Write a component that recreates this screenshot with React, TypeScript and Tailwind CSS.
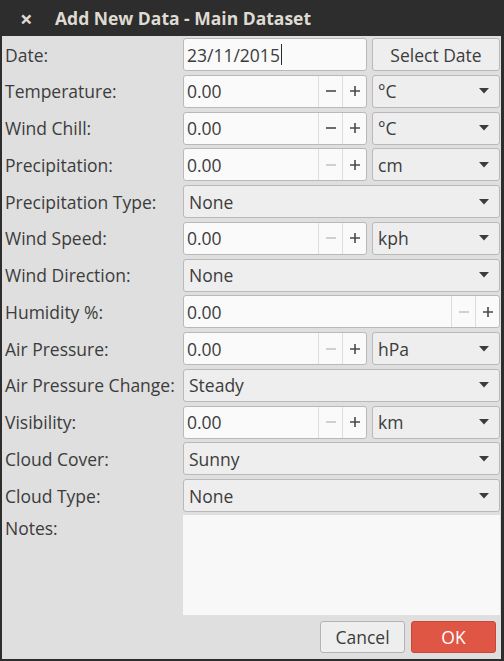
import React from "react";

const font = { fontFamily: '"Open Sans", "Noto Sans", sans-serif' };

function Arrow() {
  return (
    <svg width="10" height="6" viewBox="0 0 10 6" className="shrink-0">
      <path d="M0 0 L10 0 L5 5.5 Z" fill="#3c3c3c" />
    </svg>
  );
}

function Combo({ value }: { value: string }) {
  return (
    <div className="flex h-full flex-1 items-center justify-between rounded-[3px] border border-[#b9b9b9] bg-[#eeeeee] pl-[5px] pr-[10px] text-[#3c3c3c]">
      <span>{value}</span>
      <Arrow />
    </div>
  );
}

function Spin({ minusEnabled }: { minusEnabled: boolean }) {
  return (
    <>
      <div className="flex h-full w-[24px] items-center justify-center border-l border-[#dddddd]">
        <svg width="12" height="12" viewBox="0 0 12 12">
          <path d="M1 6 H11" stroke={minusEnabled ? "#4a4a4a" : "#c6c6c6"} strokeWidth="1.6" />
        </svg>
      </div>
      <div className="flex h-full w-[24px] items-center justify-center border-l border-[#dddddd]">
        <svg width="12" height="12" viewBox="0 0 12 12">
          <path d="M1 6 H11 M6 1 V11" stroke="#4a4a4a" strokeWidth="1.6" />
        </svg>
      </div>
    </>
  );
}

function NumInput({ minusEnabled, full }: { minusEnabled: boolean; full?: boolean }) {
  return (
    <div
      className={
        "flex h-full items-center rounded-[3px] border border-[#b9b9b9] bg-[#fafafa] text-[#3c3c3c] " +
        (full ? "flex-1" : "w-[184px]")
      }
    >
      <span className="flex-1 pl-[3px]">0.00</span>
      <Spin minusEnabled={minusEnabled} />
    </div>
  );
}

type Row = { label: string; content: React.ReactNode };

export default function App() {
  const rows: Row[] = [
    {
      label: "Date:",
      content: (
        <div className="flex h-full flex-1 gap-[5px]">
          <div className="flex h-full w-[184px] items-center rounded-[3px] border border-[#b9b9b9] bg-[#fafafa] pl-[3px] text-[#3c3c3c]">
            <span>23/11/2015</span>
            <span className="ml-[1px] inline-block h-[21px] w-[1px] bg-[#2a2a2a]" />
          </div>
          <div className="flex h-full flex-1 items-center justify-center rounded-[3px] border border-[#b9b9b9] bg-[#eeeeee] text-[#3c3c3c]">
            Select Date
          </div>
        </div>
      ),
    },
    { label: "Temperature:", content: <Unit unit="°C" minus /> },
    { label: "Wind Chill:", content: <Unit unit="°C" minus /> },
    { label: "Precipitation:", content: <Unit unit="cm" /> },
    { label: "Precipitation Type:", content: <Combo value="None" /> },
    { label: "Wind Speed:", content: <Unit unit="kph" /> },
    { label: "Wind Direction:", content: <Combo value="None" /> },
    { label: "Humidity %:", content: <NumInput minusEnabled={false} full /> },
    { label: "Air Pressure:", content: <Unit unit="hPa" /> },
    { label: "Air Pressure Change:", content: <Combo value="Steady" /> },
    { label: "Visibility:", content: <Unit unit="km" /> },
    { label: "Cloud Cover:", content: <Combo value="Sunny" /> },
    { label: "Cloud Type:", content: <Combo value="None" /> },
  ];

  return (
    <div
      className="flex h-[661px] w-[504px] flex-col border-b-2 border-l-2 border-r-[3px] border-[#2d2d2d] bg-[#dfdfdf] text-[17.5px] leading-[24px]"
      style={font}
    >
      <div className="flex h-[36px] shrink-0 items-center bg-[#2d2d2d] text-[#dfdbd2]">
        <span className="ml-[18px] w-[35px] text-[22px] font-bold leading-none">×</span>
        <span className="text-[17.5px] font-bold">Add New Data - Main Dataset</span>
      </div>
      <div className="flex flex-1 flex-col pr-[1px] pt-[2px]">
        <div className="flex flex-col gap-[3.75px]">
          {rows.map((r) => (
            <div key={r.label} className="flex h-[33px] items-center">
              <div className="w-[181px] shrink-0 whitespace-nowrap pl-[3px] text-[#3c3c3c]">{r.label}</div>
              <div className="flex h-full flex-1">{r.content}</div>
            </div>
          ))}
        </div>
        <div className="mt-[3px] flex h-[100px]">
          <div className="w-[181px] shrink-0 pl-[3px] pt-[1px] text-[#3c3c3c]">Notes:</div>
          <div className="flex-1 bg-[#f8f8f8]" />
        </div>
        <div className="mt-[6px] flex justify-end gap-[6px] pr-[4px]">
          <div className="flex h-[32px] w-[85px] items-center justify-center rounded-[3px] border border-[#b3b3b3] bg-[#eeeeee] text-[#3c3c3c]">
            Cancel
          </div>
          <div className="flex h-[32px] w-[85px] items-center justify-center rounded-[3px] border border-[#c8473a] bg-[#e05644] text-white">
            OK
          </div>
        </div>
      </div>
    </div>
  );
}

function Unit({ unit, minus }: { unit: string; minus?: boolean }) {
  return (
    <div className="flex h-full flex-1 gap-[5px]">
      <NumInput minusEnabled={!!minus} />
      <Combo value={unit} />
    </div>
  );
}
